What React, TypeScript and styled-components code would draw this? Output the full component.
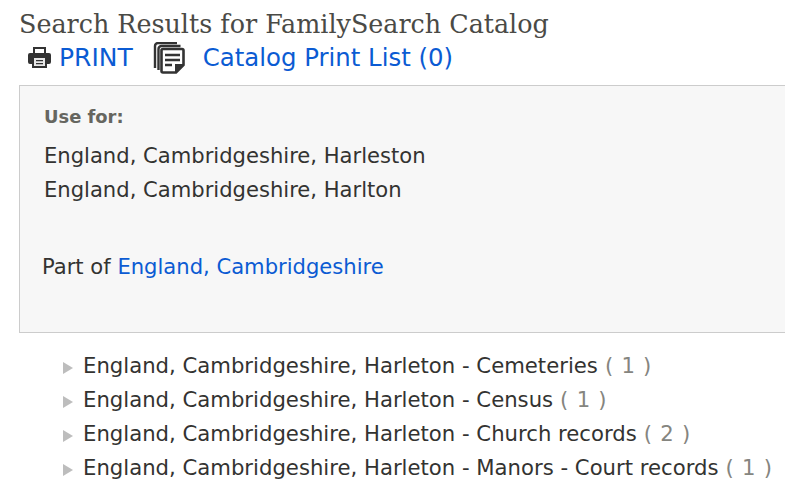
import React from 'react';
import styled, {createGlobalStyle} from 'styled-components';

const GlobalStyle = createGlobalStyle`
  html, body {
    margin: 0;
    padding: 0;
    background: #fff;
    overflow: hidden;
  }
`;

const Page = styled.div`
  width: 785px;
  height: 496px;
  overflow: hidden;
  padding: 8px 0 0 19px;
  box-sizing: border-box;
  font-family: 'DejaVu Sans', sans-serif;
  color: #333331;
`;

const Title = styled.h1`
  margin: 0;
  font-family: 'DejaVu Serif', serif;
  font-weight: 400;
  font-size: 25.4px;
  line-height: 32px;
  color: #4a4a46;
  white-space: nowrap;
`;

const Toolbar = styled.div`
  display: flex;
  align-items: center;
  height: 35px;
  padding-left: 9px;
`;

const ToolLink = styled.a<{$gap: number; $size: number}>`
  color: #0b5bd3;
  font-size: ${p => p.$size}px;
  margin-left: ${p => p.$gap}px;
  white-space: nowrap;
`;

const IconSlot = styled.span<{$gap: number}>`
  display: flex;
  margin-left: ${p => p.$gap}px;
`;

const Panel = styled.section`
  margin-top: 10px;
  width: 800px;
  height: 248px;
  box-sizing: border-box;
  background: #f7f7f7;
  border: 1px solid #cccccc;
  padding: 20px 24px;
`;

const Label = styled.div`
  font-size: 17.9px;
  font-weight: 700;
  color: #666660;
  line-height: 22px;
  margin-bottom: 11px;
`;

const Line = styled.div`
  font-size: 21.1px;
  line-height: 34px;
  white-space: nowrap;
`;

const PartOf = styled(Line)`
  margin: 43px 0 0 -2px;
`;

const BlueLink = styled.a`
  color: #0b5bd3;
`;

const List = styled.ul`
  list-style: none;
  margin: 16px 0 0;
  padding: 0 0 0 44px;
`;

const Item = styled.li`
  display: flex;
  align-items: center;
  font-size: 21.2px;
  line-height: 34px;
  white-space: nowrap;
`;

const Arrow = styled.span`
  flex: none;
  width: 0;
  height: 0;
  margin: 3px 10px 0 0;
  border-style: solid;
  border-width: 6px 0 6px 10px;
  border-color: transparent transparent transparent #bdbdbd;
`;

const Count = styled.span`
  color: #85857f;
  margin-left: 7px;
  word-spacing: 1.5px;
`;

const PrintIcon = () => (
  <svg width="23" height="21" viewBox="0 0 23 21">
    <path fill="#333" d="M5 0h13v7H5z" />
    <path fill="#fff" d="M7 2h9v4H7z" />
    <path fill="#333" d="M2 6h19a2 2 0 0 1 2 2v7a2 2 0 0 1-2 2h-2v4H4v-4H2a2 2 0 0 1-2-2V8a2 2 0 0 1 2-2z" />
    <path fill="#e8e8e8" d="M6 11h11v8H6z" />
    <path fill="#333" d="M8 13h7v1.300H8zM8 16h7v1.300H8z" />
  </svg>
);

const ListIcon = () => (
  <svg width="32" height="32" viewBox="0 0 32 32" fill="none" stroke="#333">
    <path strokeWidth="2.4" d="M2 26V4a3 3 0 0 1 3-3h19" />
    <path strokeWidth="2.4" d="M5.500 28V7a3 3 0 0 1 3-3h19" />
    <path strokeWidth="2.600" d="M10 7h19a1.500 1.500 0 0 1 1.500 1.500V23l-7.500 7.500H10A1.500 1.500 0 0 1 8.500 29V8.500A1.500 1.500 0 0 1 10 7z" />
    <path fill="#333" stroke="none" d="M22 22h9l-9 9z" />
    <path strokeWidth="2.600" d="M12 13h15M12 18h15M12 23h7" />
  </svg>
);

const rows = [
  {name: 'England, Cambridgeshire, Harleton - Cemeteries', count: 1},
  {name: 'England, Cambridgeshire, Harleton - Census', count: 1},
  {name: 'England, Cambridgeshire, Harleton - Church records', count: 2},
  {name: 'England, Cambridgeshire, Harleton - Manors - Court records', count: 1},
];

const App = () => (
  <Page>
    <GlobalStyle />
    <Title>Search Results for FamilySearch Catalog</Title>
    <Toolbar>
      <PrintIcon />
      <ToolLink $gap={8} $size={25}>PRINT</ToolLink>
      <IconSlot $gap={20}>
        <ListIcon />
      </IconSlot>
      <ToolLink $gap={18} $size={24.4}>Catalog Print List (0)</ToolLink>
    </Toolbar>
    <Panel>
      <Label>Use for:</Label>
      <Line>England, Cambridgeshire, Harleston</Line>
      <Line>England, Cambridgeshire, Harlton</Line>
      <PartOf>
        Part of <BlueLink>England, Cambridgeshire</BlueLink>
      </PartOf>
    </Panel>
    <List>
      {rows.map(row => (
        <Item key={row.name}>
          <Arrow />
          {row.name}
          <Count>( {row.count} )</Count>
        </Item>
      ))}
    </List>
  </Page>
);

export default App;
